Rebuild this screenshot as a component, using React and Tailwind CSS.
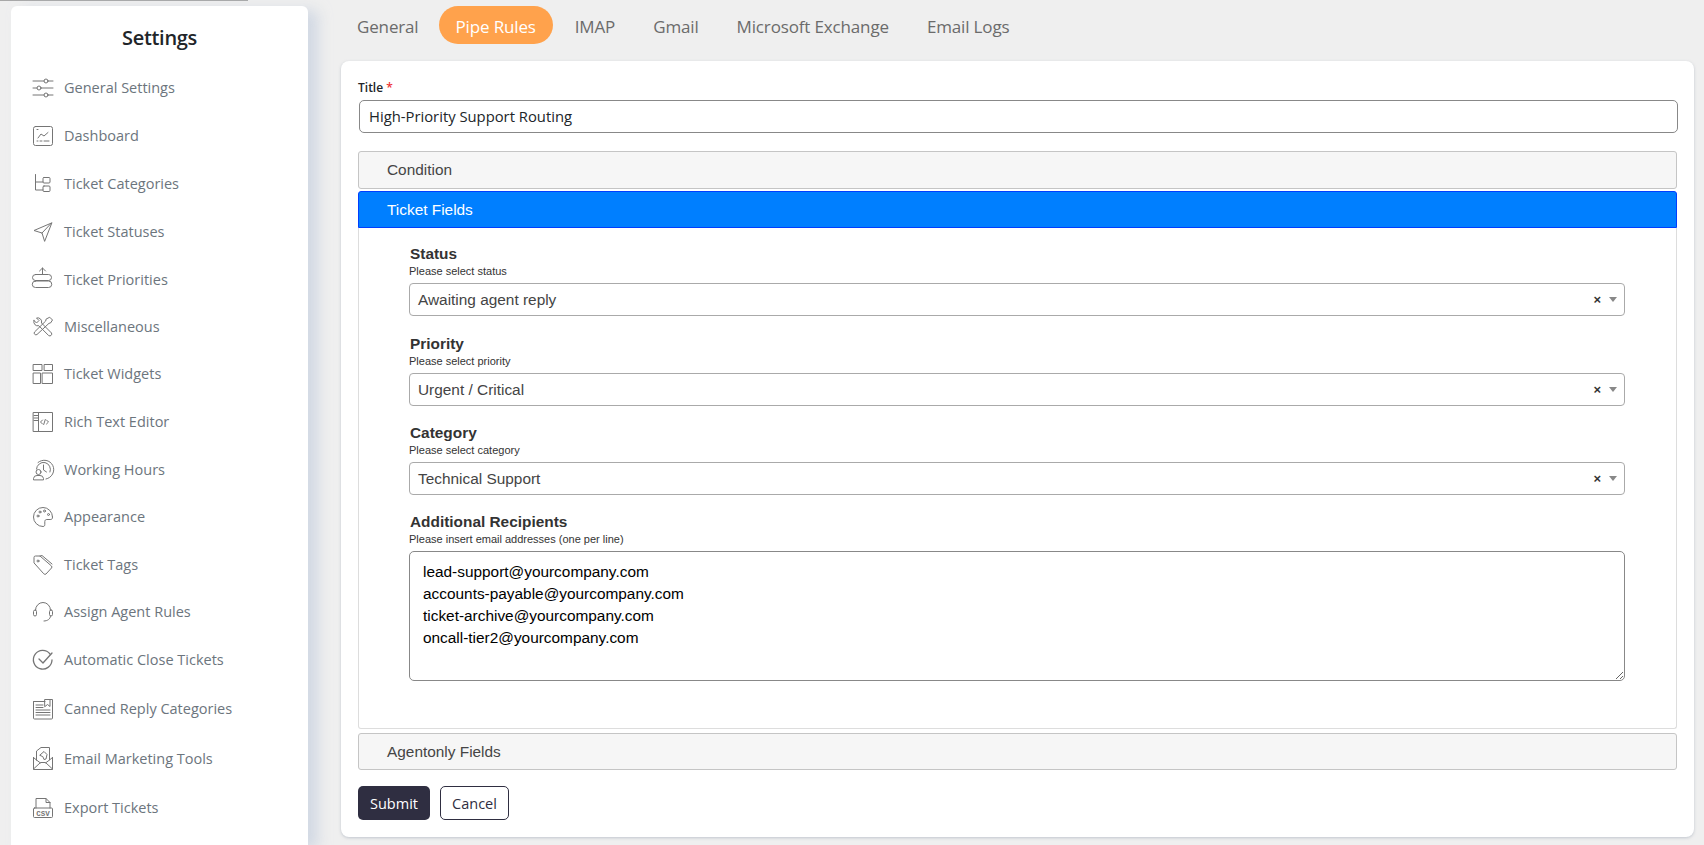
import React from "react";

const S = ({ children }) => (
  <svg viewBox="0 0 20 20" fill="none" stroke="#757575" strokeWidth="1" strokeLinecap="round" strokeLinejoin="round" className="w-5 h-5 shrink-0 overflow-visible">
    {children}
  </svg>
);

const icons = {
  sliders: (
    <S>
      <path d="M0 3h11M15 3h5M0 10h4M8 10h12M0 17h11M15 17h5" />
      <circle cx="13" cy="3" r="2" />
      <circle cx="6" cy="10" r="2" />
      <circle cx="13" cy="17" r="2" />
    </S>
  ),
  dashboard: (
    <S>
      <rect x="0.500" y="0.500" width="19" height="19" rx="2" />
      <path d="M5 12l3-4 3 2 4-3.500M4 15h1M7 15h2M11 15h5M4 3.500h1" />
    </S>
  ),
  tree: (
    <S>
      <path d="M2.500 0.500V16H10M2.500 8H10" />
      <rect x="10" y="3.500" width="7" height="5.500" rx="1" />
      <rect x="10" y="12" width="7" height="5.500" rx="1" />
    </S>
  ),
  plane: (
    <S>
      <path d="M18.500 1L1 8.500l8 2.500L11.500 19z" />
      <path d="M18.500 1L9 11" />
    </S>
  ),
  priority: (
    <S>
      <path d="M9.500 -2V4.500M6.500 1l3-3 3 3" />
      <path d="M2.500 4.500h13a3 3 0 010 6h-13a3 3 0 010-6zM2.500 11h13a3 3 0 010 6.500h-13a3 3 0 010-6.500z" />
    </S>
  ),
  tools: (
    <S>
      <path d="M1 3.500L3.500 6 6 3.500 3.500 1a4 4 0 015 5l10 10a2 2 0 01-2.700 2.700l-10-10a4 4 0 01-4.800-5.200z" />
      <path d="M17 .5l2.500 2.500-2 3-1.500.3L4 17.500a1.800 1.800 0 01-2.500-2.500L12.700 4 13 2.500z" />
    </S>
  ),
  widgets: (
    <S>
      <rect x="0.500" y="0.500" width="8.500" height="6" />
      <rect x="11.500" y="0.500" width="8" height="6" />
      <rect x="0.500" y="9" width="7" height="10.500" />
      <rect x="9.500" y="9" width="10" height="10.500" />
    </S>
  ),
  editor: (
    <S>
      <rect x="0.500" y="0.500" width="19" height="19" />
      <path d="M5.500 .5v19M1 3.500h4M1 6h4M1 8.500h4M9.500 8l-2 2 2 2M13.500 8l2 2-2 2M12.300 7.500l-1.600 5" />
    </S>
  ),
  hours: (
    <S>
      <path d="M5 2.500A9.500 9.500 0 1113 19" />
      <path d="M3.500 9A7 7 0 1117 12" />
      <path d="M10.500 5v5l3 2" />
      <circle cx="5.500" cy="12" r="2.500" />
      <path d="M.5 19.500v-1a3.500 3.500 0 013.500-3h3a3.500 3.500 0 013.500 3v1z" />
    </S>
  ),
  palette: (
    <S>
      <path d="M19.500 10A9.500 9.500 0 1010 19.500c1.500 0 1.800-1 1.800-2v-3c0-1.200.8-2 2-2h4c1.200 0 1.700-1 1.700-2.500z" />
      <circle cx="5" cy="9" r="1" />
      <circle cx="7" cy="5" r="1" />
      <circle cx="11.500" cy="4" r="1" />
      <circle cx="15.500" cy="7.500" r="1" />
    </S>
  ),
  tags: (
    <S>
      <path d="M1 7.500V2.500A1.500 1.500 0 012.500 1H7l11.500 10a1.500 1.500 0 010 2l-5.500 6a1.500 1.500 0 01-2 0z" />
      <path d="M7 1l2-.5 10 8.500" />
      <circle cx="5" cy="6" r="1" />
    </S>
  ),
  headset: (
    <S>
      <path d="M2.500 8a7.500 7.500 0 0115 0M17.500 14c0 3-3 5-6.500 5" />
      <rect x="0.500" y="8" width="3" height="6" rx="1.500" />
      <rect x="16.500" y="8" width="3" height="6" rx="1.500" />
    </S>
  ),
  check: (
    <S>
      <path d="M17 4A9.300 9.300 0 1019 10" strokeWidth="1.300" />
      <path d="M6 9l4 4 9-10" strokeWidth="1.300" />
    </S>
  ),
  doc: (
    <S>
      <path d="M1 2.500h11M15 .5h4.500V19a1 1 0 01-1 1H1.500a1 1 0 01-1-1V2.500" />
      <path d="M12 .5h5v7l-2.500-2-2.500 2zM3 6h7M3 8.500h7M3 11h14M3 13.500h14M3 16h14" />
    </S>
  ),
  mail: (
    <svg viewBox="0 0 20 23" fill="none" stroke="#757575" strokeWidth="1" strokeLinecap="round" strokeLinejoin="round" className="w-5 h-[23px] shrink-0 overflow-visible">
      <path d="M.5 10.500v12h19v-12M.5 22l7-6.500h5l7 6.500M.5 10.500l3 2.500M19.500 10.500l-3 2.500" />
      <path d="M3.500 13V4L8 .5h8.500V13l-4 3M7.500 16L3.500 13" />
      <path d="M7 8l4-3.500 3 3-1 4.500-2 .500-1-2.500z" />
    </svg>
  ),
  csv: (
    <svg viewBox="0 0 20 20" fill="none" stroke="#757575" strokeWidth="1" strokeLinecap="round" strokeLinejoin="round" className="w-5 h-5 shrink-0 overflow-visible">
      <path d="M3 10V.5h10l4 4V10M13 .5v4h4" />
      <rect x="0.500" y="10" width="19" height="9.500" rx="1" />
      <text x="10" y="17.500" textAnchor="middle" fontSize="7.500" fontWeight="700" fontFamily="'Liberation Mono', monospace" stroke="none" fill="#757575">CSV</text>
    </svg>
  ),
};

const nav = [
  ["General Settings", "sliders", "h-[48px]"],
  ["Dashboard", "dashboard", "h-[47.5px]"],
  ["Ticket Categories", "tree", "h-[48px]"],
  ["Ticket Statuses", "plane", "h-[48px]"],
  ["Ticket Priorities", "priority", "h-[48px]"],
  ["Miscellaneous", "tools", "h-[47px]"],
  ["Ticket Widgets", "widgets", "h-[47.5px]"],
  ["Rich Text Editor", "editor", "h-[47.5px]"],
  ["Working Hours", "hours", "h-[48px]"],
  ["Appearance", "palette", "h-[47.5px]"],
  ["Ticket Tags", "tags", "h-[47.5px]"],
  ["Assign Agent Rules", "headset", "h-[47.5px]"],
  ["Automatic Close Tickets", "check", "h-[47.5px]"],
  ["Canned Reply Categories", "doc", "h-[50px]"],
  ["Email Marketing Tools", "mail", "h-[50px]"],
  ["Export Tickets", "csv", "h-[49px]"],
];

const tabs = ["General", "Pipe Rules", "IMAP", "Gmail", "Microsoft Exchange", "Email Logs"];

const Field = ({ label, sub, value, cls }) => (
  <div className={cls}>
    <div className="text-[15.4px] leading-[18px] font-bold text-[#333] pl-px">{label}</div>
    <div className="text-[11px] leading-[14px] text-[#333] mt-px">{sub}</div>
    <div className="mt-[5px] h-[33px] border border-[#aaa] rounded-[4px] bg-white flex items-center pl-2 pr-[7px] text-[15.4px] text-[#444]">
      <span className="flex-1">{value}</span>
      <span className="text-[#333] font-bold text-[13px] leading-none mr-[8px]">×</span>
      <span className="w-0 h-0 border-x-[4px] border-x-transparent border-t-[5px] border-t-[#888]" />
    </div>
  </div>
);

export default function App() {
  return (
    <div className="h-[845px] w-[1704px] overflow-hidden bg-[#efefef] flex flex-col font-['Open_Sans',sans-serif]">
      <div className="h-px w-[248px] bg-[#a8a8a8] shrink-0" />
      <div className="flex flex-1 min-h-0">
        <aside className="ml-[11px] mt-[5px] w-[297px] shrink-0 bg-white rounded-t-[6px] shadow-[10px_4px_14px_rgba(190,201,220,0.6)] pl-[22px]">
          <h2 className="h-[58px] pt-[13px] -ml-[22px] text-center text-[20px] leading-[38px] font-semibold text-[#212529] tracking-[-0.3px]">Settings</h2>
          <nav className="flex flex-col">
            {nav.map(([name, icon, h]) => (
              <div key={name} className={`flex items-center gap-[11px] ${h}`}>
                {icons[icon]}
                <span className="text-[14.5px] text-[#6c757d] whitespace-nowrap">{name}</span>
              </div>
            ))}
          </nav>
        </aside>
        <main className="flex-1 min-w-0 pl-[33px] pr-[10px]">
          <div className="flex items-center h-[38px] mt-[5px] -ml-[3px]">
            {tabs.map((t) => (
              <div
                key={t}
                className={
                  t === "Pipe Rules"
                    ? "h-[38px] px-[17px] ml-[1px] mr-[3px] rounded-full bg-[#ffa24c] text-white text-[17px] leading-[41px] tracking-[-0.15px]"
                    : "h-[38px] px-[19px] text-[#6b6b6b] text-[17px] leading-[41px] tracking-[-0.15px]"
                }
              >
                {t}
              </div>
            ))}
          </div>
          <section className="mt-[17px] h-[776px] bg-white rounded-[8px] shadow-[0_1px_3px_rgba(150,160,175,0.5)] px-[17px] pt-[20px]">
            <label className="block h-[20px] text-[12px] leading-[14px] font-semibold text-[#212529]">
              Title <span className="text-[#e33]">*</span>
            </label>
            <input
              readOnly
              value="High-Priority Support Routing"
              className="block ml-px w-[1319px] h-[33px] -mt-[1px] border border-[#888] rounded-[5px] pl-[9px] pr-[9px] pb-[2px] text-[14.8px] text-[#212529] outline-none bg-white"
            />
            <div className="mt-[18px] font-['Liberation_Sans',Arial,sans-serif]">
              <div className="h-[38px] border border-[#c5c5c5] rounded-[3px] bg-[#f6f6f6] text-[#454545] text-[15.4px] leading-[36px] pl-[28px]">Condition</div>
              <div className="mt-[2px] h-[37px] border border-[#003eff] rounded-t-[3px] bg-[#007fff] text-white text-[15.4px] leading-[36px] pl-[28px]">Ticket Fields</div>
              <div className="h-[501px] border border-t-0 border-[#ddd] rounded-b-[3px] pl-[50px] pr-[51px] pt-[17px]">
                <Field label="Status" sub="Please select status" value="Awaiting agent reply" cls="" />
                <Field label="Priority" sub="Please select priority" value="Urgent / Critical" cls="mt-[19px]" />
                <Field label="Category" sub="Please select category" value="Technical Support" cls="mt-[18px]" />
                <div className="mt-[18px]">
                  <div className="text-[15.4px] leading-[18px] font-bold text-[#333] pl-px">Additional Recipients</div>
                  <div className="text-[11px] leading-[14px] text-[#333] mt-px">Please insert email addresses (one per line)</div>
                  <textarea
                    readOnly
                    defaultValue={"lead-support@yourcompany.com\naccounts-payable@yourcompany.com\nticket-archive@yourcompany.com\noncall-tier2@yourcompany.com"}
                    className="block mt-[5px] w-full h-[130px] border border-[#888] rounded-[5px] px-[13px] pt-[9px] text-[15.4px] leading-[22px] text-black outline-none bg-white resize-y"
                  />
                </div>
              </div>
              <div className="mt-[4px] h-[37px] border border-[#c5c5c5] rounded-[3px] bg-[#f6f6f6] text-[#454545] text-[15.4px] leading-[36px] pl-[28px]">Agentonly Fields</div>
            </div>
            <div className="flex gap-[10px] mt-[16px]">
              <button className="h-[34px] pt-[2px] w-[72px] rounded-[5px] bg-[#2f2e41] text-white text-[14.5px]">Submit</button>
              <button className="h-[34px] pt-[2px] w-[69px] rounded-[5px] border border-[#2f2e41] bg-white text-[#2f2e41] text-[14.5px]">Cancel</button>
            </div>
          </section>
        </main>
      </div>
    </div>
  );
}
